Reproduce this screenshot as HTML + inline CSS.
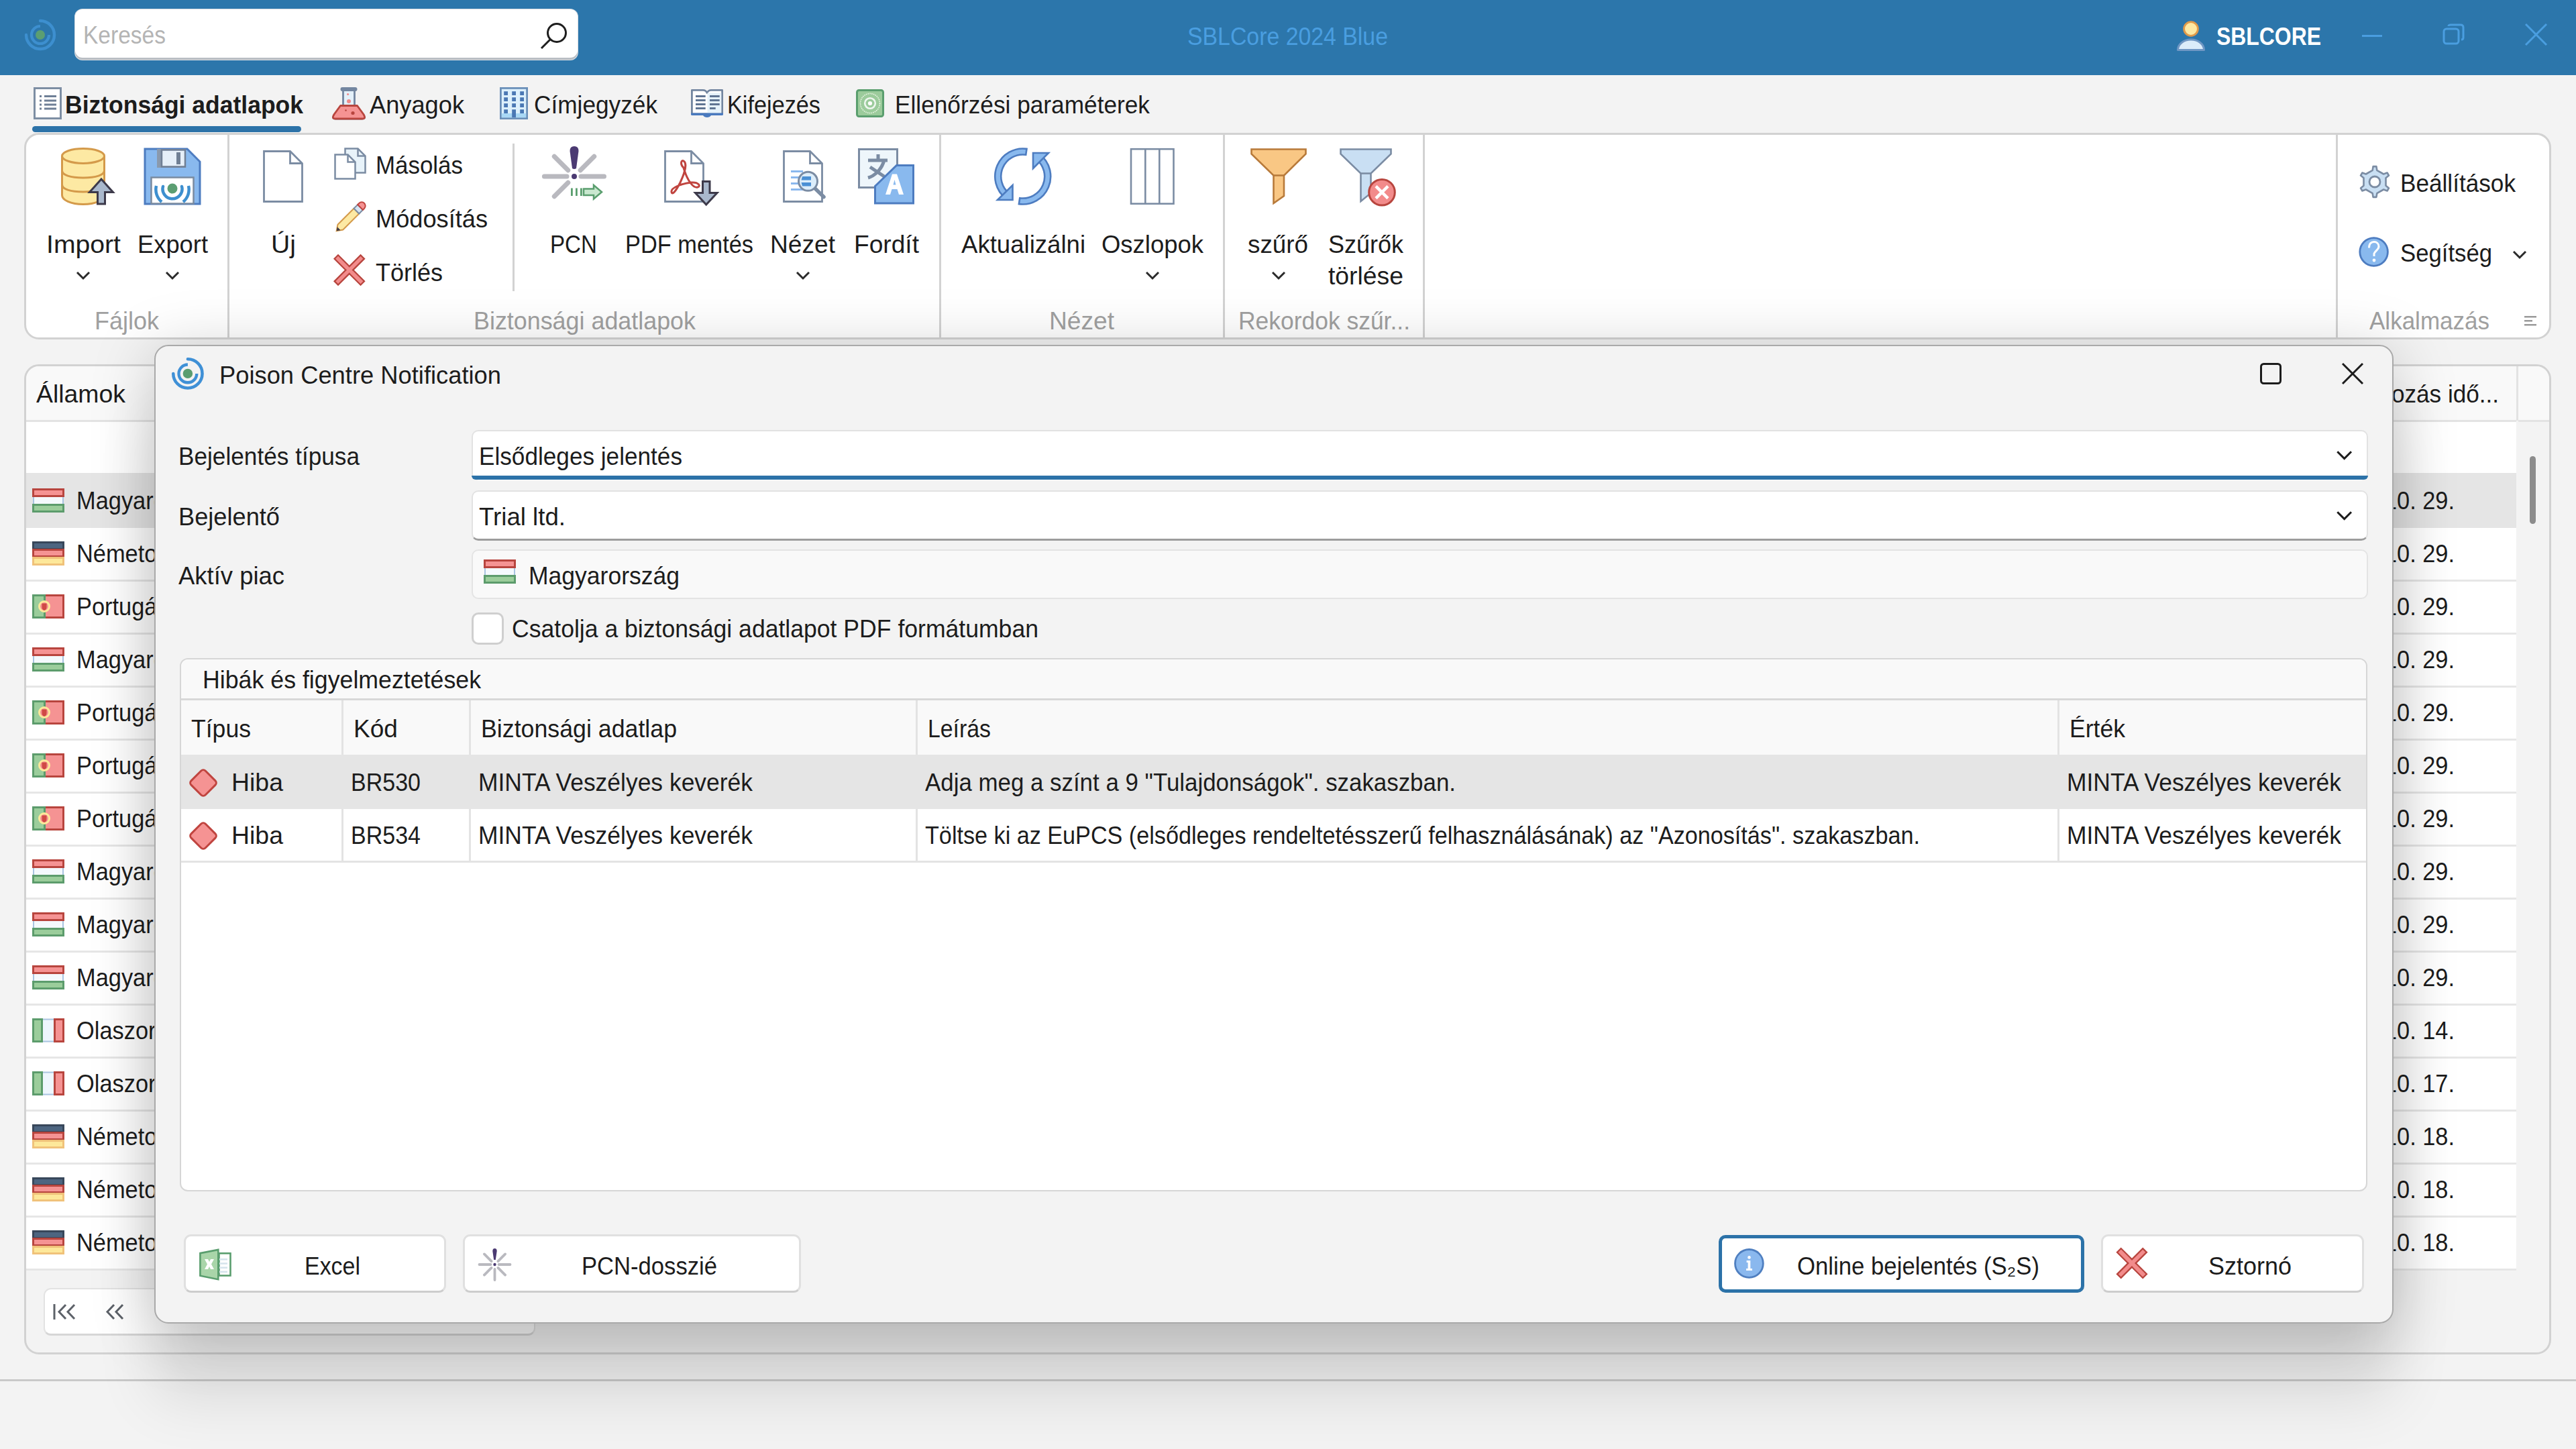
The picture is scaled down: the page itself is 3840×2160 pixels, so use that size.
<!DOCTYPE html><html><head><meta charset="utf-8"><style>
html,body{margin:0;padding:0;width:3840px;height:2160px;overflow:hidden;background:#f3f3f3;font-family:'Liberation Sans', sans-serif;}
.t{position:absolute;white-space:nowrap;line-height:1;transform-origin:0 0;font-family:'Liberation Sans', sans-serif;}
svg{overflow:visible}
</style></head><body>
<div style="position:absolute;left:0px;top:0px;width:3840px;height:112px;background:#2c76ab"></div>
<div style="position:absolute;left:112px;top:14px;width:749px;height:75px;background:#fff;border-radius:11px;box-shadow:inset 0 -3px 0 #b9bec4, 0 0 0 1px #d9dde2;box-sizing:border-box"></div>
<span class="t" id="t1" style="left:123.5px;top:35px;font-size:36px;color:#b4b4b4;transform:scaleX(0.9313);">Keresés</span>
<svg style="position:absolute;left:800px;top:30px" width="50" height="50" viewBox="0 0 50 50"><circle cx="30" cy="19" r="13.5" fill="none" stroke="#1e1e1e" stroke-width="3"/><line x1="20.5" y1="28.5" x2="7" y2="42" stroke="#1e1e1e" stroke-width="3"/></svg>
<svg style="position:absolute;left:30.0px;top:22.0px" width="60.0" height="60.0" viewBox="-30.0 -30.0 60.0 60.0"><circle cx="0" cy="0" r="7.0" fill="#5b9e72"/><path d="M 0 -13.0 A 13.0 13.0 0 1 0 13.0 0" fill="none" stroke="#3d8fcf" stroke-width="4.2" /><path d="M -21.0 0 A 21.0 21.0 0 1 0 0 -21.0" fill="none" stroke="#3d8fcf" stroke-width="4.4" stroke-linecap="round"/></svg>
<span class="t" id="t2" style="left:1769.5px;top:37px;font-size:36px;color:#4a9ee0;transform:scaleX(0.9396);">SBLCore 2024 Blue</span>
<svg style="position:absolute;left:3240px;top:28px" width="52" height="50" viewBox="0 0 52 50"><circle cx="26" cy="15" r="10.4" fill="#fde9a3" stroke="#e09a4a" stroke-width="2.8"/><path d="M6.5 46.5 A19.5 15.5 0 0 1 45.5 46.5 Z" fill="#dcedfa" stroke="#6f97c4" stroke-width="3" stroke-linejoin="round"/></svg>
<span class="t" id="t3" style="left:3303.5px;top:37px;font-size:36px;font-weight:bold;color:#ffffff;transform:scaleX(0.8863);">SBLCORE</span>
<div style="position:absolute;left:3521px;top:52px;width:30px;height:3px;background:#4a9ee0"></div>
<svg style="position:absolute;left:3640px;top:34px" width="36" height="36" viewBox="0 0 36 36"><rect x="3" y="9" width="22" height="22" rx="4" fill="none" stroke="#4a9ee0" stroke-width="3"/><path d="M10 5 Q10 3 13 3 H28 Q32 3 32 7 V22 Q32 25 29 25" fill="none" stroke="#4a9ee0" stroke-width="3"/></svg>
<svg style="position:absolute;left:3762px;top:34px" width="36" height="36" viewBox="0 0 36 36"><line x1="3" y1="2" x2="34" y2="33" stroke="#4a9ee0" stroke-width="3"/><line x1="34" y1="2" x2="3" y2="33" stroke="#4a9ee0" stroke-width="3"/></svg>
<span class="t" id="t4" style="left:96.5px;top:139px;font-size:36px;font-weight:bold;color:#1c1c1c;transform:scaleX(0.9859);">Biztonsági adatlapok</span>
<div style="position:absolute;left:48px;top:188px;width:401px;height:9px;background:#2c72a8;border-radius:5px"></div>
<span class="t" id="t5" style="left:550.5px;top:139px;font-size:36px;color:#1c1c1c;transform:scaleX(1.0064);">Anyagok</span>
<span class="t" id="t6" style="left:795.5px;top:139px;font-size:36px;color:#1c1c1c;transform:scaleX(0.9784);">Címjegyzék</span>
<span class="t" id="t7" style="left:1083.5px;top:139px;font-size:36px;color:#1c1c1c;transform:scaleX(0.9515);">Kifejezés</span>
<span class="t" id="t8" style="left:1333.5px;top:139px;font-size:36px;color:#1c1c1c;transform:scaleX(0.9789);">Ellenőrzési paraméterek</span>
<svg style="position:absolute;left:50px;top:130px" width="42" height="48" viewBox="0 0 42 48"><rect x="1.5" y="1.5" width="39" height="45" fill="#fff" stroke="#7d8ea3" stroke-width="3"/><rect x="9" y="12" width="3" height="3" fill="#6e7f96"/><rect x="16" y="12" width="18" height="3" fill="#6e7f96"/><rect x="9" y="18.5" width="3" height="3" fill="#6e7f96"/><rect x="16" y="18.5" width="18" height="3" fill="#6e7f96"/><rect x="9" y="24.5" width="3" height="3" fill="#6e7f96"/><rect x="16" y="24.5" width="18" height="3" fill="#6e7f96"/><rect x="9" y="30.5" width="3" height="3" fill="#6e7f96"/><rect x="16" y="30.5" width="18" height="3" fill="#6e7f96"/></svg>
<svg style="position:absolute;left:0px;top:0px" width="1" height="1" viewBox="0 0 1 1"><path d="M511.5 136 V157 L497.5 172.5 Q494.5 177 500 177 H540 Q545.5 177 542.5 172.5 L528.5 157 V136" fill="#e4f1fa" stroke="#7386a0" stroke-width="2.8" stroke-linejoin="round"/><rect x="507.5" y="130" width="25" height="6" rx="3" fill="#7386a0"/><path d="M507.5 157.5 H532.5 L542 170.5 Q546 177 540 177 H500 Q494 177 498 170.5 Z" fill="#f59393" stroke="#b8453e" stroke-width="2.8" stroke-linejoin="round"/><circle cx="518.6" cy="140.5" r="1.6" fill="#f08a8a"/><circle cx="520" cy="151" r="3" fill="#f08a8a"/><circle cx="515.5" cy="164.5" r="1.3" fill="#b8453e"/><circle cx="526" cy="168.5" r="2.6" fill="#b8453e"/></svg>
<svg style="position:absolute;left:745px;top:130px" width="42" height="48" viewBox="0 0 42 48"><rect x="1.4" y="1.4" width="39.2" height="45.2" fill="#dcf0fc" stroke="#6a8fb8" stroke-width="2.8"/><rect x="2.8" y="39" width="36.4" height="6.2" fill="#a9d8f5"/><rect x="6.2" y="6.2" width="5.8" height="5.8" fill="#4a78b4"/><rect x="6.2" y="15.2" width="5.8" height="5.8" fill="#4a78b4"/><rect x="6.2" y="24.2" width="5.8" height="5.8" fill="#4a78b4"/><rect x="6.2" y="33.2" width="5.8" height="5.8" fill="#4a78b4"/><rect x="18.2" y="6.2" width="5.8" height="5.8" fill="#4a78b4"/><rect x="18.2" y="15.2" width="5.8" height="5.8" fill="#4a78b4"/><rect x="18.2" y="24.2" width="5.8" height="5.8" fill="#4a78b4"/><rect x="30.2" y="6.2" width="5.8" height="5.8" fill="#4a78b4"/><rect x="30.2" y="15.2" width="5.8" height="5.8" fill="#4a78b4"/><rect x="30.2" y="24.2" width="5.8" height="5.8" fill="#4a78b4"/><rect x="30.2" y="33.2" width="5.8" height="5.8" fill="#4a78b4"/><rect x="18.2" y="33.2" width="5.8" height="12" fill="#4a78b4"/></svg>
<svg style="position:absolute;left:1029px;top:132px" width="50" height="44" viewBox="0 0 50 44"><path d="M2.4 2.4 H19 Q23 2.4 25 6.5 Q27 2.4 31 2.4 H47.6 V38 H2.4 Z" fill="#fff" stroke="#7386a0" stroke-width="2.8" stroke-linejoin="round"/><rect x="25.5" y="6.5" width="20.7" height="30" fill="#e6f2fa"/><rect x="8" y="10" width="14.7" height="3" fill="#607593"/><rect x="29" y="10" width="14.7" height="3" fill="#607593"/><rect x="8" y="16" width="14.7" height="3" fill="#607593"/><rect x="29" y="16" width="14.7" height="3" fill="#607593"/><rect x="8" y="22" width="14.7" height="3" fill="#607593"/><rect x="29" y="22" width="14.7" height="3" fill="#607593"/><rect x="8" y="28" width="14.7" height="3" fill="#607593"/><rect x="29" y="28" width="8.7" height="3" fill="#607593"/><path d="M1 36.5 H49 V38.5 Q49 40 47 40 H31 Q29 43 25 43 Q21 43 19 40 H3 Q1 40 1 38.5 Z" fill="#4a7abf"/></svg>
<svg style="position:absolute;left:1276px;top:133px" width="42" height="42" viewBox="0 0 42 42"><rect x="1.5" y="1.5" width="39" height="39" rx="3" fill="#9bcb9b" stroke="#5a9e6e" stroke-width="3"/><circle cx="21" cy="21" r="14.5" fill="none" stroke="#eaf5e4" stroke-width="1.6" stroke-dasharray="1.6 1.2"/><circle cx="21" cy="21" r="7.8" fill="none" stroke="#eef6ef" stroke-width="2.6"/><circle cx="21" cy="21" r="3.1" fill="#fff"/></svg>
<div style="position:absolute;left:36px;top:198px;width:3767px;height:308px;background:#fff;border:3px solid #d2d2d2;border-radius:22px;box-sizing:border-box"></div>
<div style="position:absolute;left:339px;top:200px;width:3px;height:304px;background:#d2d2d2"></div>
<div style="position:absolute;left:1400px;top:200px;width:3px;height:304px;background:#d2d2d2"></div>
<div style="position:absolute;left:1823px;top:200px;width:3px;height:304px;background:#d2d2d2"></div>
<div style="position:absolute;left:2121px;top:200px;width:3px;height:304px;background:#d2d2d2"></div>
<div style="position:absolute;left:3482px;top:200px;width:3px;height:304px;background:#d2d2d2"></div>
<div style="position:absolute;left:764px;top:214px;width:3px;height:220px;background:#d2d2d2"></div>
<span class="t" id="t9" style="left:68.5px;top:347px;font-size:36px;color:#1c1c1c;transform:scaleX(1.0879);">Import</span>
<span class="t" id="t10" style="left:204.5px;top:347px;font-size:36px;color:#1c1c1c;transform:scaleX(1.0092);">Export</span>
<span class="t" id="t11" style="left:403.5px;top:347px;font-size:36px;color:#1c1c1c;transform:scaleX(1.0882);">Új</span>
<span class="t" id="t12" style="left:559.5px;top:229px;font-size:36px;color:#1c1c1c;transform:scaleX(0.9697);">Másolás</span>
<span class="t" id="t13" style="left:559.5px;top:309px;font-size:36px;color:#1c1c1c;transform:scaleX(1.0056);">Módosítás</span>
<span class="t" id="t14" style="left:559.5px;top:389px;font-size:36px;color:#1c1c1c;transform:scaleX(0.9997);">Törlés</span>
<span class="t" id="t15" style="left:819.5px;top:347px;font-size:36px;color:#1c1c1c;transform:scaleX(0.9209);">PCN</span>
<span class="t" id="t16" style="left:931.5px;top:347px;font-size:36px;color:#1c1c1c;transform:scaleX(0.9547);">PDF mentés</span>
<span class="t" id="t17" style="left:1147.5px;top:347px;font-size:36px;color:#1c1c1c;transform:scaleX(1.0314);">Nézet</span>
<span class="t" id="t18" style="left:1272.5px;top:347px;font-size:36px;color:#1c1c1c;transform:scaleX(1.0316);">Fordít</span>
<span class="t" id="t19" style="left:1432.5px;top:347px;font-size:36px;color:#1c1c1c;transform:scaleX(1.0160);">Aktualizálni</span>
<span class="t" id="t20" style="left:1641.5px;top:347px;font-size:36px;color:#1c1c1c;transform:scaleX(1.0128);">Oszlopok</span>
<span class="t" id="t21" style="left:1859.5px;top:347px;font-size:36px;color:#1c1c1c;transform:scaleX(1.0224);">szűrő</span>
<span class="t" id="t22" style="left:1979.5px;top:347px;font-size:36px;color:#1c1c1c;transform:scaleX(0.9996);">Szűrők</span>
<span class="t" id="t23" style="left:1979.5px;top:394px;font-size:36px;color:#1c1c1c;transform:scaleX(1.0364);">törlése</span>
<span class="t" id="t24" style="left:3577.5px;top:256px;font-size:36px;color:#1c1c1c;transform:scaleX(0.9767);">Beállítások</span>
<span class="t" id="t25" style="left:3577.5px;top:360px;font-size:36px;color:#1c1c1c;transform:scaleX(0.9640);">Segítség</span>
<span class="t" id="t26" style="left:140.5px;top:461px;font-size:36px;color:#a0a0a0;transform:scaleX(0.9997);">Fájlok</span>
<span class="t" id="t27" style="left:705.5px;top:461px;font-size:36px;color:#a0a0a0;transform:scaleX(0.9963);">Biztonsági adatlapok</span>
<span class="t" id="t28" style="left:1563.5px;top:461px;font-size:36px;color:#a0a0a0;transform:scaleX(1.0314);">Nézet</span>
<span class="t" id="t29" style="left:1845.5px;top:461px;font-size:36px;color:#a0a0a0;transform:scaleX(0.9842);">Rekordok szűr...</span>
<span class="t" id="t30" style="left:3531.5px;top:461px;font-size:36px;color:#a0a0a0;transform:scaleX(0.9725);">Alkalmazás</span>
<svg style="position:absolute;left:88px;top:218px" width="84" height="90" viewBox="0 0 84 90"><path d="M4.5 14.5 V73 C4.5 80 17 86.5 36 86.5 C55 86.5 67.5 80 67.5 73 V14.5" fill="#fde9a3" stroke="#d49a4a" stroke-width="3"/><ellipse cx="36" cy="14.5" rx="31.5" ry="11" fill="#fde9a3" stroke="#d49a4a" stroke-width="3"/><path d="M4.5 36 C4.5 43 17 47 36 47 C55 47 67.5 43 67.5 36" fill="none" stroke="#d49a4a" stroke-width="3"/><path d="M4.5 57 C4.5 64 17 68 36 68 C55 68 67.5 64 67.5 57" fill="none" stroke="#d49a4a" stroke-width="3"/><path d="M63 49 L80.5 68.5 H68.5 V86 H57.5 V68.5 H45.5 Z" fill="#a9b8cc" stroke="#3d3a4a" stroke-width="3" stroke-linejoin="miter"/></svg>
<svg style="position:absolute;left:213px;top:219px" width="88" height="88" viewBox="0 0 88 88"><path d="M3 3 H66 L85 22 V85 H3 Z" fill="#89b9ee" stroke="#4d7cc0" stroke-width="3"/><rect x="21" y="3" width="43" height="28" fill="#8a99ac"/><rect x="28" y="4.5" width="35" height="25" fill="#e6eff8" stroke="#707f94" stroke-width="2.5"/><rect x="50" y="8" width="6" height="18" fill="#707f94"/><rect x="12.5" y="45.5" width="63" height="39" fill="#fff" stroke="#7a8ba0" stroke-width="2.5"/><circle cx="44" cy="62" r="7.5" fill="#5b9e72"/><path d="M58 59 A14.5 14.5 0 1 1 30 59" fill="none" stroke="#3d8fcf" stroke-width="4.5" stroke-linecap="round"/><path d="M20 58 A24 24 0 0 0 28 82 M68 58 A24 24 0 0 1 60 82" fill="none" stroke="#3d8fcf" stroke-width="4.5"/><path d="M30 41 A 17 17 0 0 1 58 41" fill="none" stroke="#fff" stroke-width="0"/></svg>
<svg style="position:absolute;left:0px;top:0px" width="1" height="1" viewBox="0 0 1 1"><path d="M393.5 225.5 H432.5 L450.5 243.5 V300.5 H393.5 Z" fill="#fff" stroke="#7b8ca3" stroke-width="2.8" stroke-linejoin="miter"/><path d="M432.5 225.5 V243.5 H450.5" fill="none" stroke="#7b8ca3" stroke-width="2.8"/></svg>
<svg style="position:absolute;left:0px;top:0px" width="1" height="1" viewBox="0 0 1 1"><path d="M514.5 221.5 H533.5 L544.5 232.5 V257.5 H514.5 Z" fill="#e8f3fa" stroke="#7b8ca3" stroke-width="2.5" stroke-linejoin="miter"/><path d="M533.5 221.5 V232.5 H544.5" fill="none" stroke="#7b8ca3" stroke-width="2.5"/><path d="M499.5 230.5 H518.5 L529.5 241.5 V266.5 H499.5 Z" fill="#fff" stroke="#7b8ca3" stroke-width="2.5" stroke-linejoin="miter"/><path d="M518.5 230.5 V241.5 H529.5" fill="none" stroke="#7b8ca3" stroke-width="2.5"/></svg>
<svg style="position:absolute;left:0px;top:0px" width="1" height="1" viewBox="0 0 1 1"><g transform="translate(521.5 324.5) rotate(-45)"><path d="M-28 0 L-20 -5.5 H14 V5.5 H-20 Z" fill="#fde9a3" stroke="#d49a4a" stroke-width="2"/><path d="M-28 0 L-23 -3.4 V3.4 Z" fill="#3d3a4a"/><rect x="14" y="-5.5" width="8" height="11" fill="#d6e4f2" stroke="#7b8ca3" stroke-width="2"/><path d="M22 -5.5 H25 A5.5 5.5 0 0 1 25 5.5 H22 Z" fill="#f59393" stroke="#c0443f" stroke-width="2"/></g></svg>
<svg style="position:absolute;left:0px;top:0px" width="1" height="1" viewBox="0 0 1 1"><g transform="translate(520.8 402.5)"><g transform="rotate(45)"><rect x="-27.5" y="-3.8" width="55" height="7.6" fill="#f28b8b" stroke="#b8453e" stroke-width="2.4"/></g><g transform="rotate(-45)"><rect x="-27.5" y="-3.8" width="55" height="7.6" fill="#f28b8b" stroke="#b8453e" stroke-width="2.4"/></g><g transform="rotate(45)"><rect x="-26.3" y="-2.6" width="52.6" height="5.2" fill="#f28b8b"/></g></g></svg>
<svg style="position:absolute;left:0px;top:0px" width="1" height="1" viewBox="0 0 1 1"><line x1="845.0" y1="263.0" x2="811.4" y2="263.0" stroke="#b9b9bf" stroke-width="7.0" stroke-linecap="round"/><line x1="866.0" y1="263.0" x2="900.5" y2="263.0" stroke="#b9b9bf" stroke-width="7.0" stroke-linecap="round"/><line x1="846.8" y1="253.8" x2="826.3" y2="233.3" stroke="#b9b9bf" stroke-width="7.0" stroke-linecap="round"/><line x1="865.2" y1="253.8" x2="885.7" y2="233.3" stroke="#b9b9bf" stroke-width="7.0" stroke-linecap="round"/><line x1="846.8" y1="272.2" x2="826.3" y2="292.7" stroke="#b9b9bf" stroke-width="7.0" stroke-linecap="round"/><path d="M849.5 225.0 Q849.5 218.0 856 218.0 Q862.5 218.0 862.5 225.0 L859.0 251.0 Q856 253.0 853.0 251.0 Z" fill="#4b3a72"/><circle cx="856" cy="263" r="4.0" fill="#4b3a72"/><rect x="851.0" y="280.5" width="2.8" height="11.5" fill="#5a9e6e"/><rect x="858.0" y="280.5" width="2.8" height="11.5" fill="#5a9e6e"/><rect x="865.0" y="280.5" width="2.8" height="11.5" fill="#5a9e6e"/><path d="M870.0 281.5 H885.0 V276.0 L897.0 286.2 L885.0 296.5 V291.0 H870.0 Z" fill="#c9e8cf" stroke="#5a9e6e" stroke-width="2.5"/></svg>
<svg style="position:absolute;left:0px;top:0px" width="1" height="1" viewBox="0 0 1 1"><path d="M991.5 225.5 H1030.5 L1048.5 243.5 V300.5 H991.5 Z" fill="#fff" stroke="#7b8ca3" stroke-width="2.8" stroke-linejoin="miter"/><path d="M1030.5 225.5 V243.5 H1048.5" fill="none" stroke="#7b8ca3" stroke-width="2.8"/><path d="M1019 250 C1013 244 1016 238 1019 240 C1024 243 1022 255 1014 272 C1008 284 1002 292 1001 286 C1000 280 1015 274 1030 272 C1042 271 1045 278 1040 279 C1033 281 1024 268 1019 250 Z" fill="none" stroke="#c0443f" stroke-width="3"/><path d="M1047.5 270.5 H1058 V287.5 H1069 L1052.7 305 L1036.5 287.5 H1047.5 Z" fill="#a9b8cc" stroke="#3d3a4a" stroke-width="3" stroke-linejoin="miter"/></svg>
<svg style="position:absolute;left:0px;top:0px" width="1" height="1" viewBox="0 0 1 1"><path d="M1168.5 225.5 H1207.5 L1225.5 243.5 V300.5 H1168.5 Z" fill="#fff" stroke="#7b8ca3" stroke-width="2.8" stroke-linejoin="miter"/><path d="M1207.5 225.5 V243.5 H1225.5" fill="none" stroke="#7b8ca3" stroke-width="2.8"/><rect x="1179" y="254" width="18" height="3" fill="#8ab8ee"/><rect x="1179" y="263" width="18" height="3" fill="#8ab8ee"/><rect x="1179" y="272" width="18" height="3" fill="#8ab8ee"/><rect x="1179" y="281" width="18" height="3" fill="#8ab8ee"/><line x1="1214" y1="280" x2="1228" y2="293.5" stroke="#7b8ca3" stroke-width="5.5" stroke-linecap="round"/><circle cx="1204.5" cy="270.3" r="14" fill="#dcedfa" stroke="#7b8ca3" stroke-width="3"/><path d="M1196 263 H1209 V268.5 H1194.5 Z M1194.5 272 H1209 V277.5 H1196 Z" fill="#4a8fd4"/></svg>
<svg style="position:absolute;left:0px;top:0px" width="1" height="1" viewBox="0 0 1 1"><rect x="1280.5" y="222.5" width="57" height="57" fill="#eef6fb" stroke="#7b8ca3" stroke-width="3"/><path d="M1294 239 H1323 M1309 230 V239 M1318 239 C1314 253 1304 262 1294 265 M1297 249 L1318 263" fill="none" stroke="#7b8ca3" stroke-width="5"/><path d="M1304.5 277.5 L1336.5 246.5 H1361.5 V303 H1304.5 Z" fill="#89b9ee" stroke="#4d7cc0" stroke-width="3"/><path d="M1320 290 L1330 259.5 H1337 L1347 290 H1340 L1337.5 282 H1329.5 L1327 290 Z M1331.5 275.5 H1335.5 L1333.5 268 Z" fill="#fff" fill-rule="evenodd"/></svg>
<svg style="position:absolute;left:0px;top:0px" width="1" height="1" viewBox="0 0 1 1"><path d="M1530.5 221.9 A41.5 41.5 0 0 0 1499.2 295.7 L1504.7 288.6 A32.5 32.5 0 0 1 1529.2 230.8 Z " fill="#89b9ee" stroke="#4d7cc0" stroke-width="2.6"/><path d="M1487 298 H1509.5 V276 Z" fill="#89b9ee" stroke="#4d7cc0" stroke-width="2.6" stroke-linejoin="miter"/><path d="M1518.9 304.1 A41.5 41.5 0 0 0 1550.2 230.3 L1544.7 237.4 A32.5 32.5 0 0 1 1520.2 295.2 Z" fill="#89b9ee" stroke="#4d7cc0" stroke-width="2.6"/><path d="M1540 228 H1563 L1540 251 Z" fill="#89b9ee" stroke="#4d7cc0" stroke-width="2.6" stroke-linejoin="miter"/></svg>
<svg style="position:absolute;left:0px;top:0px" width="1" height="1" viewBox="0 0 1 1"><rect x="1686" y="222.2" width="63.5" height="81.5" fill="#fff" stroke="#7b8ca3" stroke-width="2.6"/><line x1="1707.3" y1="222" x2="1707.3" y2="304" stroke="#7b8ca3" stroke-width="2.6"/><line x1="1728.3" y1="222" x2="1728.3" y2="304" stroke="#7b8ca3" stroke-width="2.6"/></svg>
<svg style="position:absolute;left:0px;top:0px" width="1" height="1" viewBox="0 0 1 1"><path d="M1865.5 222.5 H1946.5 V229.5 L1914 261.5 V292 L1898.5 303 V261.5 L1865.5 229.5 Z" fill="#f9c784" stroke="#b87a3a" stroke-width="2.6" stroke-linejoin="miter"/><line x1="1898.5" y1="261.5" x2="1914" y2="261.5" stroke="#b87a3a" stroke-width="2.6"/></svg>
<svg style="position:absolute;left:0px;top:0px" width="1" height="1" viewBox="0 0 1 1"><path d="M1998.5 222.5 H2073.5 V229.5 L2043.5 258.5 V288 L2028.5 300 V258.5 L1998.5 229.5 Z" fill="#c9dff3" stroke="#7b8ca3" stroke-width="2.6" stroke-linejoin="miter"/><line x1="2028.5" y1="258.5" x2="2043.5" y2="258.5" stroke="#7b8ca3" stroke-width="2.6"/><circle cx="2060" cy="286.7" r="19.3" fill="#f28b8b" stroke="#b8453e" stroke-width="3"/><path d="M2051 277.7 L2069 295.7 M2069 277.7 L2051 295.7" stroke="#fff" stroke-width="4.5"/></svg>
<svg style="position:absolute;left:0px;top:0px" width="1" height="1" viewBox="0 0 1 1"><path d="M3536.7 253.8 L3537.6 248.1 L3542.4 248.1 L3543.3 253.8 L3553.2 259.5 L3558.6 257.5 L3561.0 261.6 L3556.5 265.3 L3556.5 276.7 L3561.0 280.4 L3558.6 284.5 L3553.2 282.5 L3543.3 288.2 L3542.4 293.9 L3537.6 293.9 L3536.7 288.2 L3526.8 282.5 L3521.4 284.5 L3519.0 280.4 L3523.5 276.7 L3523.5 265.3 L3519.0 261.6 L3521.4 257.5 L3526.8 259.5 Z" fill="#c9dff3" stroke="#7b8ca3" stroke-width="2.6" stroke-linejoin="round"/><circle cx="3540" cy="271" r="8" fill="#fff" stroke="#7b8ca3" stroke-width="2.8"/></svg>
<svg style="position:absolute;left:0px;top:0px" width="1" height="1" viewBox="0 0 1 1"><circle cx="3538.6" cy="375.5" r="20.8" fill="#89b9ee" stroke="#4d7cc0" stroke-width="2.8"/><path d="M3531.5 369.5 C3531.5 363 3535 360.5 3538.8 360.5 C3543 360.5 3546 363.5 3546 367.5 C3546 372 3541 373.5 3539 378 V382" fill="none" stroke="#fff" stroke-width="3"/><circle cx="3539" cy="388" r="2.4" fill="#fff"/></svg>
<svg style="position:absolute;left:113.0px;top:404.0px" width="22.0" height="14.0" viewBox="0 0 22.0 14.0"><polyline points="2.0,2.0 11.0,11.0 20.0,2.0" fill="none" stroke="#2a2a2a" stroke-width="3"/></svg>
<svg style="position:absolute;left:246.0px;top:404.0px" width="22.0" height="14.0" viewBox="0 0 22.0 14.0"><polyline points="2.0,2.0 11.0,11.0 20.0,2.0" fill="none" stroke="#2a2a2a" stroke-width="3"/></svg>
<svg style="position:absolute;left:1186.0px;top:404.0px" width="22.0" height="14.0" viewBox="0 0 22.0 14.0"><polyline points="2.0,2.0 11.0,11.0 20.0,2.0" fill="none" stroke="#2a2a2a" stroke-width="3"/></svg>
<svg style="position:absolute;left:1707.0px;top:404.0px" width="22.0" height="14.0" viewBox="0 0 22.0 14.0"><polyline points="2.0,2.0 11.0,11.0 20.0,2.0" fill="none" stroke="#2a2a2a" stroke-width="3"/></svg>
<svg style="position:absolute;left:1895.0px;top:404.0px" width="22.0" height="14.0" viewBox="0 0 22.0 14.0"><polyline points="2.0,2.0 11.0,11.0 20.0,2.0" fill="none" stroke="#2a2a2a" stroke-width="3"/></svg>
<svg style="position:absolute;left:3745.0px;top:373.0px" width="22.0" height="14.0" viewBox="0 0 22.0 14.0"><polyline points="2.0,2.0 11.0,11.0 20.0,2.0" fill="none" stroke="#2a2a2a" stroke-width="3"/></svg>
<svg style="position:absolute;left:3762px;top:469px" width="22" height="20" viewBox="0 0 22 20"><rect x="1" y="2" width="18" height="2.5" fill="#9a9a9a"/><rect x="1" y="8" width="12" height="2.5" fill="#9a9a9a"/><rect x="1" y="14" width="18" height="2.5" fill="#9a9a9a"/></svg>
<div style="position:absolute;left:36px;top:543px;width:3767px;height:1476px;background:#f3f3f3;border:3px solid #d2d2d2;border-radius:22px;box-sizing:border-box"></div>
<div style="position:absolute;left:39px;top:546px;width:3712px;height:81px;background:#f9f9f9;border-top-left-radius:19px"></div>
<div style="position:absolute;left:39px;top:626px;width:3712px;height:3px;background:#e3e3e3"></div>
<div style="position:absolute;left:39px;top:629px;width:3712px;height:1264px;background:#fff"></div>
<div style="position:absolute;left:3751px;top:546px;width:3px;height:81px;background:#e3e3e3"></div>
<div style="position:absolute;left:3754px;top:546px;width:46px;height:81px;background:#f9f9f9;border-top-right-radius:19px"></div>
<div style="position:absolute;left:3754px;top:626px;width:46px;height:3px;background:#e3e3e3"></div>
<span class="t" id="t31" style="left:53.5px;top:570px;font-size:36px;color:#1c1c1c;transform:scaleX(1.0387);">Államok</span>
<span class="t" id="t32" style="left:3564.5px;top:570px;font-size:36px;color:#1c1c1c;transform:scaleX(0.9751);">ozás idő...</span>
<div style="position:absolute;left:39px;top:705px;width:3712px;height:82px;background:#e5e5e5"></div>
<div style="position:absolute;left:39px;top:864px;width:3712px;height:3px;background:#e6e6e6"></div>
<div style="position:absolute;left:39px;top:943px;width:3712px;height:3px;background:#e6e6e6"></div>
<div style="position:absolute;left:39px;top:1022px;width:3712px;height:3px;background:#e6e6e6"></div>
<div style="position:absolute;left:39px;top:1101px;width:3712px;height:3px;background:#e6e6e6"></div>
<div style="position:absolute;left:39px;top:1180px;width:3712px;height:3px;background:#e6e6e6"></div>
<div style="position:absolute;left:39px;top:1259px;width:3712px;height:3px;background:#e6e6e6"></div>
<div style="position:absolute;left:39px;top:1338px;width:3712px;height:3px;background:#e6e6e6"></div>
<div style="position:absolute;left:39px;top:1417px;width:3712px;height:3px;background:#e6e6e6"></div>
<div style="position:absolute;left:39px;top:1496px;width:3712px;height:3px;background:#e6e6e6"></div>
<div style="position:absolute;left:39px;top:1575px;width:3712px;height:3px;background:#e6e6e6"></div>
<div style="position:absolute;left:39px;top:1654px;width:3712px;height:3px;background:#e6e6e6"></div>
<div style="position:absolute;left:39px;top:1733px;width:3712px;height:3px;background:#e6e6e6"></div>
<div style="position:absolute;left:39px;top:1812px;width:3712px;height:3px;background:#e6e6e6"></div>
<div style="position:absolute;left:39px;top:1891px;width:3712px;height:3px;background:#e6e6e6"></div>
<svg style="position:absolute;left:48px;top:728px" width="48" height="36" viewBox="0 0 48 36"><rect x="1" y="11" width="46" height="14" fill="#f4f9fd"/><line x1="2" y1="11" x2="2" y2="25" stroke="#a9c4e0" stroke-width="2"/><line x1="46" y1="11" x2="46" y2="25" stroke="#a9c4e0" stroke-width="2"/><rect x="1.5" y="1.5" width="45" height="10" fill="#f59393" stroke="#b8453e" stroke-width="3"/><rect x="1.5" y="24.5" width="45" height="10" fill="#9bcd9b" stroke="#5c9c6c" stroke-width="3"/></svg>
<span class="t" id="t33" style="left:113.5px;top:729px;font-size:36px;color:#1c1c1c;transform:scaleX(0.9550);">Magyarország</span>
<span class="t" id="t34" style="left:3553.5px;top:729px;font-size:36px;color:#1c1c1c;transform:scaleX(0.9537);">10. 29.</span>
<svg style="position:absolute;left:48px;top:807px" width="48" height="36" viewBox="0 0 48 36"><rect x="1.5" y="1.5" width="45" height="10" fill="#4d6580" stroke="#38475a" stroke-width="3"/><rect x="1.5" y="12.5" width="45" height="10" fill="#f59393" stroke="#b8453e" stroke-width="3"/><rect x="1.5" y="24.5" width="45" height="10" fill="#fde89a" stroke="#f0c27a" stroke-width="3"/></svg>
<span class="t" id="t35" style="left:113.5px;top:808px;font-size:36px;color:#1c1c1c;transform:scaleX(0.9550);">Németország</span>
<span class="t" id="t36" style="left:3553.5px;top:808px;font-size:36px;color:#1c1c1c;transform:scaleX(0.9537);">10. 29.</span>
<svg style="position:absolute;left:48px;top:886px" width="48" height="36" viewBox="0 0 48 36"><rect x="1.5" y="1.5" width="45" height="33" fill="#f59393" stroke="#b8453e" stroke-width="3"/><rect x="1.5" y="1.5" width="17" height="33" fill="#9bcd9b" stroke="#5c9c6c" stroke-width="3"/><circle cx="18" cy="18" r="7.5" fill="#f59393" stroke="#fde89a" stroke-width="3"/><path d="M14.5 13.5 H21.5 V19 Q21.5 23 18 24 Q14.5 23 14.5 19 Z" fill="#d04a45"/></svg>
<span class="t" id="t37" style="left:113.5px;top:887px;font-size:36px;color:#1c1c1c;transform:scaleX(0.9550);">Portugália</span>
<span class="t" id="t38" style="left:3553.5px;top:887px;font-size:36px;color:#1c1c1c;transform:scaleX(0.9537);">10. 29.</span>
<svg style="position:absolute;left:48px;top:965px" width="48" height="36" viewBox="0 0 48 36"><rect x="1" y="11" width="46" height="14" fill="#f4f9fd"/><line x1="2" y1="11" x2="2" y2="25" stroke="#a9c4e0" stroke-width="2"/><line x1="46" y1="11" x2="46" y2="25" stroke="#a9c4e0" stroke-width="2"/><rect x="1.5" y="1.5" width="45" height="10" fill="#f59393" stroke="#b8453e" stroke-width="3"/><rect x="1.5" y="24.5" width="45" height="10" fill="#9bcd9b" stroke="#5c9c6c" stroke-width="3"/></svg>
<span class="t" id="t39" style="left:113.5px;top:966px;font-size:36px;color:#1c1c1c;transform:scaleX(0.9550);">Magyarország</span>
<span class="t" id="t40" style="left:3553.5px;top:966px;font-size:36px;color:#1c1c1c;transform:scaleX(0.9537);">10. 29.</span>
<svg style="position:absolute;left:48px;top:1044px" width="48" height="36" viewBox="0 0 48 36"><rect x="1.5" y="1.5" width="45" height="33" fill="#f59393" stroke="#b8453e" stroke-width="3"/><rect x="1.5" y="1.5" width="17" height="33" fill="#9bcd9b" stroke="#5c9c6c" stroke-width="3"/><circle cx="18" cy="18" r="7.5" fill="#f59393" stroke="#fde89a" stroke-width="3"/><path d="M14.5 13.5 H21.5 V19 Q21.5 23 18 24 Q14.5 23 14.5 19 Z" fill="#d04a45"/></svg>
<span class="t" id="t41" style="left:113.5px;top:1045px;font-size:36px;color:#1c1c1c;transform:scaleX(0.9550);">Portugália</span>
<span class="t" id="t42" style="left:3553.5px;top:1045px;font-size:36px;color:#1c1c1c;transform:scaleX(0.9537);">10. 29.</span>
<svg style="position:absolute;left:48px;top:1123px" width="48" height="36" viewBox="0 0 48 36"><rect x="1.5" y="1.5" width="45" height="33" fill="#f59393" stroke="#b8453e" stroke-width="3"/><rect x="1.5" y="1.5" width="17" height="33" fill="#9bcd9b" stroke="#5c9c6c" stroke-width="3"/><circle cx="18" cy="18" r="7.5" fill="#f59393" stroke="#fde89a" stroke-width="3"/><path d="M14.5 13.5 H21.5 V19 Q21.5 23 18 24 Q14.5 23 14.5 19 Z" fill="#d04a45"/></svg>
<span class="t" id="t43" style="left:113.5px;top:1124px;font-size:36px;color:#1c1c1c;transform:scaleX(0.9550);">Portugália</span>
<span class="t" id="t44" style="left:3553.5px;top:1124px;font-size:36px;color:#1c1c1c;transform:scaleX(0.9537);">10. 29.</span>
<svg style="position:absolute;left:48px;top:1202px" width="48" height="36" viewBox="0 0 48 36"><rect x="1.5" y="1.5" width="45" height="33" fill="#f59393" stroke="#b8453e" stroke-width="3"/><rect x="1.5" y="1.5" width="17" height="33" fill="#9bcd9b" stroke="#5c9c6c" stroke-width="3"/><circle cx="18" cy="18" r="7.5" fill="#f59393" stroke="#fde89a" stroke-width="3"/><path d="M14.5 13.5 H21.5 V19 Q21.5 23 18 24 Q14.5 23 14.5 19 Z" fill="#d04a45"/></svg>
<span class="t" id="t45" style="left:113.5px;top:1203px;font-size:36px;color:#1c1c1c;transform:scaleX(0.9550);">Portugália</span>
<span class="t" id="t46" style="left:3553.5px;top:1203px;font-size:36px;color:#1c1c1c;transform:scaleX(0.9537);">10. 29.</span>
<svg style="position:absolute;left:48px;top:1281px" width="48" height="36" viewBox="0 0 48 36"><rect x="1" y="11" width="46" height="14" fill="#f4f9fd"/><line x1="2" y1="11" x2="2" y2="25" stroke="#a9c4e0" stroke-width="2"/><line x1="46" y1="11" x2="46" y2="25" stroke="#a9c4e0" stroke-width="2"/><rect x="1.5" y="1.5" width="45" height="10" fill="#f59393" stroke="#b8453e" stroke-width="3"/><rect x="1.5" y="24.5" width="45" height="10" fill="#9bcd9b" stroke="#5c9c6c" stroke-width="3"/></svg>
<span class="t" id="t47" style="left:113.5px;top:1282px;font-size:36px;color:#1c1c1c;transform:scaleX(0.9550);">Magyarország</span>
<span class="t" id="t48" style="left:3553.5px;top:1282px;font-size:36px;color:#1c1c1c;transform:scaleX(0.9537);">10. 29.</span>
<svg style="position:absolute;left:48px;top:1360px" width="48" height="36" viewBox="0 0 48 36"><rect x="1" y="11" width="46" height="14" fill="#f4f9fd"/><line x1="2" y1="11" x2="2" y2="25" stroke="#a9c4e0" stroke-width="2"/><line x1="46" y1="11" x2="46" y2="25" stroke="#a9c4e0" stroke-width="2"/><rect x="1.5" y="1.5" width="45" height="10" fill="#f59393" stroke="#b8453e" stroke-width="3"/><rect x="1.5" y="24.5" width="45" height="10" fill="#9bcd9b" stroke="#5c9c6c" stroke-width="3"/></svg>
<span class="t" id="t49" style="left:113.5px;top:1361px;font-size:36px;color:#1c1c1c;transform:scaleX(0.9550);">Magyarország</span>
<span class="t" id="t50" style="left:3553.5px;top:1361px;font-size:36px;color:#1c1c1c;transform:scaleX(0.9537);">10. 29.</span>
<svg style="position:absolute;left:48px;top:1439px" width="48" height="36" viewBox="0 0 48 36"><rect x="1" y="11" width="46" height="14" fill="#f4f9fd"/><line x1="2" y1="11" x2="2" y2="25" stroke="#a9c4e0" stroke-width="2"/><line x1="46" y1="11" x2="46" y2="25" stroke="#a9c4e0" stroke-width="2"/><rect x="1.5" y="1.5" width="45" height="10" fill="#f59393" stroke="#b8453e" stroke-width="3"/><rect x="1.5" y="24.5" width="45" height="10" fill="#9bcd9b" stroke="#5c9c6c" stroke-width="3"/></svg>
<span class="t" id="t51" style="left:113.5px;top:1440px;font-size:36px;color:#1c1c1c;transform:scaleX(0.9550);">Magyarország</span>
<span class="t" id="t52" style="left:3553.5px;top:1440px;font-size:36px;color:#1c1c1c;transform:scaleX(0.9537);">10. 29.</span>
<svg style="position:absolute;left:48px;top:1518px" width="48" height="36" viewBox="0 0 48 36"><rect x="1.5" y="1.5" width="45" height="33" fill="#eef6fd" stroke="#a9c4e0" stroke-width="2"/><rect x="1.5" y="1.5" width="13" height="33" fill="#9bcd9b" stroke="#5c9c6c" stroke-width="3"/><rect x="33.5" y="1.5" width="13" height="33" fill="#f59393" stroke="#b8453e" stroke-width="3"/></svg>
<span class="t" id="t53" style="left:113.5px;top:1519px;font-size:36px;color:#1c1c1c;transform:scaleX(0.9550);">Olaszország</span>
<span class="t" id="t54" style="left:3553.5px;top:1519px;font-size:36px;color:#1c1c1c;transform:scaleX(0.9537);">10. 14.</span>
<svg style="position:absolute;left:48px;top:1597px" width="48" height="36" viewBox="0 0 48 36"><rect x="1.5" y="1.5" width="45" height="33" fill="#eef6fd" stroke="#a9c4e0" stroke-width="2"/><rect x="1.5" y="1.5" width="13" height="33" fill="#9bcd9b" stroke="#5c9c6c" stroke-width="3"/><rect x="33.5" y="1.5" width="13" height="33" fill="#f59393" stroke="#b8453e" stroke-width="3"/></svg>
<span class="t" id="t55" style="left:113.5px;top:1598px;font-size:36px;color:#1c1c1c;transform:scaleX(0.9550);">Olaszország</span>
<span class="t" id="t56" style="left:3553.5px;top:1598px;font-size:36px;color:#1c1c1c;transform:scaleX(0.9537);">10. 17.</span>
<svg style="position:absolute;left:48px;top:1676px" width="48" height="36" viewBox="0 0 48 36"><rect x="1.5" y="1.5" width="45" height="10" fill="#4d6580" stroke="#38475a" stroke-width="3"/><rect x="1.5" y="12.5" width="45" height="10" fill="#f59393" stroke="#b8453e" stroke-width="3"/><rect x="1.5" y="24.5" width="45" height="10" fill="#fde89a" stroke="#f0c27a" stroke-width="3"/></svg>
<span class="t" id="t57" style="left:113.5px;top:1677px;font-size:36px;color:#1c1c1c;transform:scaleX(0.9550);">Németország</span>
<span class="t" id="t58" style="left:3553.5px;top:1677px;font-size:36px;color:#1c1c1c;transform:scaleX(0.9537);">10. 18.</span>
<svg style="position:absolute;left:48px;top:1755px" width="48" height="36" viewBox="0 0 48 36"><rect x="1.5" y="1.5" width="45" height="10" fill="#4d6580" stroke="#38475a" stroke-width="3"/><rect x="1.5" y="12.5" width="45" height="10" fill="#f59393" stroke="#b8453e" stroke-width="3"/><rect x="1.5" y="24.5" width="45" height="10" fill="#fde89a" stroke="#f0c27a" stroke-width="3"/></svg>
<span class="t" id="t59" style="left:113.5px;top:1756px;font-size:36px;color:#1c1c1c;transform:scaleX(0.9550);">Németország</span>
<span class="t" id="t60" style="left:3553.5px;top:1756px;font-size:36px;color:#1c1c1c;transform:scaleX(0.9537);">10. 18.</span>
<svg style="position:absolute;left:48px;top:1834px" width="48" height="36" viewBox="0 0 48 36"><rect x="1.5" y="1.5" width="45" height="10" fill="#4d6580" stroke="#38475a" stroke-width="3"/><rect x="1.5" y="12.5" width="45" height="10" fill="#f59393" stroke="#b8453e" stroke-width="3"/><rect x="1.5" y="24.5" width="45" height="10" fill="#fde89a" stroke="#f0c27a" stroke-width="3"/></svg>
<span class="t" id="t61" style="left:113.5px;top:1835px;font-size:36px;color:#1c1c1c;transform:scaleX(0.9550);">Németország</span>
<span class="t" id="t62" style="left:3553.5px;top:1835px;font-size:36px;color:#1c1c1c;transform:scaleX(0.9537);">10. 18.</span>
<div style="position:absolute;left:3771px;top:680px;width:9px;height:101px;background:#8c8c8c;border-radius:5px"></div>
<div style="position:absolute;left:65px;top:1920px;width:733px;height:71px;background:#fff;border:2px solid #e3e3e3;border-bottom:3px solid #d6d6d6;border-radius:11px;box-sizing:border-box"></div>
<svg style="position:absolute;left:78px;top:1942px" width="40" height="28" viewBox="0 0 40 28"><line x1="3" y1="2" x2="3" y2="25" stroke="#5d6269" stroke-width="3"/><polyline points="20,3 10,13.5 20,24" fill="none" stroke="#5d6269" stroke-width="3"/><polyline points="33,3 23,13.5 33,24" fill="none" stroke="#5d6269" stroke-width="3"/></svg>
<svg style="position:absolute;left:155px;top:1942px" width="36" height="28" viewBox="0 0 36 28"><polyline points="15,3 5,13.5 15,24" fill="none" stroke="#5d6269" stroke-width="3"/><polyline points="28,3 18,13.5 28,24" fill="none" stroke="#5d6269" stroke-width="3"/></svg>
<div style="position:absolute;left:0px;top:2056px;width:3840px;height:3px;background:#c9c9c9"></div>
<div style="position:absolute;left:230px;top:514px;width:3338px;height:1459px;background:#f3f3f3;border:2px solid #a9a9a9;border-radius:21px;box-sizing:border-box;box-shadow:0 12px 95px rgba(0,0,0,0.21), 0 111px 90px rgba(0,0,0,0.106)"></div>
<svg style="position:absolute;left:249.1px;top:526.1px" width="61.800000000000004" height="61.800000000000004" viewBox="-30.900000000000002 -30.900000000000002 61.800000000000004 61.800000000000004"><circle cx="0" cy="0" r="7.21" fill="#5a9d70"/><path d="M 0 -13.39 A 13.39 13.39 0 1 0 13.39 0" fill="none" stroke="#3f90d6" stroke-width="4.3260000000000005" /><path d="M -21.63 0 A 21.63 21.63 0 1 0 0 -21.63" fill="none" stroke="#3f90d6" stroke-width="4.532000000000001" stroke-linecap="round"/></svg>
<span class="t" id="t63" style="left:326.5px;top:542px;font-size:36px;color:#1c1c1c;transform:scaleX(1.0091);">Poison Centre Notification</span>
<svg style="position:absolute;left:3368px;top:540px" width="34" height="34" viewBox="0 0 34 34"><rect x="2.5" y="2.5" width="29" height="29" rx="4" fill="none" stroke="#1c1c1c" stroke-width="3"/></svg>
<svg style="position:absolute;left:3490px;top:540px" width="34" height="34" viewBox="0 0 34 34"><line x1="2" y1="2" x2="32" y2="32" stroke="#1c1c1c" stroke-width="3"/><line x1="32" y1="2" x2="2" y2="32" stroke="#1c1c1c" stroke-width="3"/></svg>
<span class="t" id="t64" style="left:265.5px;top:663px;font-size:36px;color:#1c1c1c;transform:scaleX(0.9776);">Bejelentés típusa</span>
<span class="t" id="t65" style="left:265.5px;top:753px;font-size:36px;color:#1c1c1c;transform:scaleX(1.0058);">Bejelentő</span>
<span class="t" id="t66" style="left:265.5px;top:841px;font-size:36px;color:#1c1c1c;transform:scaleX(1.0124);">Aktív piac</span>
<div style="position:absolute;left:703px;top:641px;width:2827px;height:75px;background:#fff;border:2px solid #e2e2e2;border-bottom:none;border-radius:10px;box-sizing:border-box;overflow:hidden"></div>
<div style="position:absolute;left:703px;top:709px;width:2827px;height:6px;background:#2c72a8;border-radius:0 0 10px 10px"></div>
<span class="t" id="t67" style="left:713.5px;top:663px;font-size:36px;color:#1c1c1c;transform:scaleX(0.9768);">Elsődleges jelentés</span>
<svg style="position:absolute;left:3482.35px;top:670.95px" width="25.299999999999997" height="16.099999999999998" viewBox="0 0 25.299999999999997 16.099999999999998"><polyline points="2.3,2.3 12.649999999999999,12.649999999999999 23.0,2.3" fill="none" stroke="#1c1c1c" stroke-width="3"/></svg>
<div style="position:absolute;left:703px;top:731px;width:2827px;height:75px;background:#fff;border:2px solid #e2e2e2;border-bottom:3px solid #9d9d9d;border-radius:10px;box-sizing:border-box"></div>
<span class="t" id="t68" style="left:713.5px;top:753px;font-size:36px;color:#1c1c1c;transform:scaleX(1.0183);">Trial ltd.</span>
<svg style="position:absolute;left:3482.35px;top:760.95px" width="25.299999999999997" height="16.099999999999998" viewBox="0 0 25.299999999999997 16.099999999999998"><polyline points="2.3,2.3 12.649999999999999,12.649999999999999 23.0,2.3" fill="none" stroke="#1c1c1c" stroke-width="3"/></svg>
<div style="position:absolute;left:703px;top:819px;width:2827px;height:74px;background:#f9f9f9;border:2px solid #e4e4e4;border-radius:10px;box-sizing:border-box"></div>
<svg style="position:absolute;left:721px;top:834px" width="48" height="36" viewBox="0 0 48 36"><rect x="1" y="11" width="46" height="14" fill="#f4f9fd"/><line x1="2" y1="11" x2="2" y2="25" stroke="#a9c4e0" stroke-width="2"/><line x1="46" y1="11" x2="46" y2="25" stroke="#a9c4e0" stroke-width="2"/><rect x="1.5" y="1.5" width="45" height="10" fill="#f59393" stroke="#b8453e" stroke-width="3"/><rect x="1.5" y="24.5" width="45" height="10" fill="#9bcd9b" stroke="#5c9c6c" stroke-width="3"/></svg>
<span class="t" id="t69" style="left:787.5px;top:841px;font-size:36px;color:#1c1c1c;transform:scaleX(0.9864);">Magyarország</span>
<div style="position:absolute;left:703px;top:913px;width:48px;height:48px;background:#fff;border:3px solid #cfcfcf;border-radius:10px;box-sizing:border-box"></div>
<span class="t" id="t70" style="left:762.5px;top:920px;font-size:36px;color:#1c1c1c;transform:scaleX(0.9881);">Csatolja a biztonsági adatlapot PDF formátumban</span>
<div style="position:absolute;left:268px;top:981px;width:3261px;height:795px;background:#fff;border:2px solid #d6d6d6;border-radius:12px;box-sizing:border-box"></div>
<div style="position:absolute;left:270px;top:983px;width:3257px;height:58px;background:#f9f9f9;border-radius:10px 10px 0 0"></div>
<div style="position:absolute;left:270px;top:1041px;width:3257px;height:3px;background:#d8d8d8"></div>
<div style="position:absolute;left:270px;top:1044px;width:3257px;height:81px;background:#f9f9f9"></div>
<span class="t" id="t71" style="left:301.5px;top:996px;font-size:36px;color:#1c1c1c;transform:scaleX(0.9924);">Hibák és figyelmeztetések</span>
<div style="position:absolute;left:509px;top:1044px;width:3px;height:240px;background:#e3e3e3"></div>
<div style="position:absolute;left:699px;top:1044px;width:3px;height:240px;background:#e3e3e3"></div>
<div style="position:absolute;left:1365px;top:1044px;width:3px;height:240px;background:#e3e3e3"></div>
<div style="position:absolute;left:3067px;top:1044px;width:3px;height:240px;background:#e3e3e3"></div>
<div style="position:absolute;left:270px;top:1125px;width:3257px;height:81px;background:#e5e5e5"></div>
<div style="position:absolute;left:270px;top:1283px;width:3257px;height:3px;background:#e3e3e3"></div>
<span class="t" id="t72" style="left:284.5px;top:1069px;font-size:36px;color:#1c1c1c;transform:scaleX(0.9884);">Típus</span>
<span class="t" id="t73" style="left:526.5px;top:1069px;font-size:36px;color:#1c1c1c;transform:scaleX(1.0302);">Kód</span>
<span class="t" id="t74" style="left:716.5px;top:1069px;font-size:36px;color:#1c1c1c;transform:scaleX(0.9925);">Biztonsági adatlap</span>
<span class="t" id="t75" style="left:1382.5px;top:1069px;font-size:36px;color:#1c1c1c;transform:scaleX(0.9394);">Leírás</span>
<span class="t" id="t76" style="left:3084.5px;top:1069px;font-size:36px;color:#1c1c1c;transform:scaleX(0.9877);">Érték</span>
<svg style="position:absolute;left:281px;top:1145px" width="44" height="44" viewBox="0 0 44 44"><rect x="7" y="7" width="30" height="30" rx="4.5" transform="rotate(45 22 22)" fill="#f59393" stroke="#c0443f" stroke-width="3"/></svg>
<span class="t" id="t77" style="left:344.5px;top:1149px;font-size:36px;color:#1c1c1c;transform:scaleX(1.0399);">Hiba</span>
<span class="t" id="t78" style="left:522.5px;top:1149px;font-size:36px;color:#1c1c1c;transform:scaleX(0.9448);">BR530</span>
<span class="t" id="t79" style="left:712.5px;top:1149px;font-size:36px;color:#1c1c1c;transform:scaleX(0.9844);">MINTA Veszélyes keverék</span>
<span class="t" id="t80" style="left:1378.5px;top:1149px;font-size:36px;color:#1c1c1c;transform:scaleX(0.9685);">Adja meg a színt a 9 &quot;Tulajdonságok&quot;. szakaszban.</span>
<span class="t" id="t81" style="left:3080.5px;top:1149px;font-size:36px;color:#1c1c1c;transform:scaleX(0.9844);">MINTA Veszélyes keverék</span>
<svg style="position:absolute;left:281px;top:1224px" width="44" height="44" viewBox="0 0 44 44"><rect x="7" y="7" width="30" height="30" rx="4.5" transform="rotate(45 22 22)" fill="#f59393" stroke="#c0443f" stroke-width="3"/></svg>
<span class="t" id="t82" style="left:344.5px;top:1228px;font-size:36px;color:#1c1c1c;transform:scaleX(1.0399);">Hiba</span>
<span class="t" id="t83" style="left:522.5px;top:1228px;font-size:36px;color:#1c1c1c;transform:scaleX(0.9448);">BR534</span>
<span class="t" id="t84" style="left:712.5px;top:1228px;font-size:36px;color:#1c1c1c;transform:scaleX(0.9844);">MINTA Veszélyes keverék</span>
<span class="t" id="t85" style="left:1378.5px;top:1228px;font-size:36px;color:#1c1c1c;transform:scaleX(0.9492);">Töltse ki az EuPCS (elsődleges rendeltetésszerű felhasználásának) az &quot;Azonosítás&quot;. szakaszban.</span>
<span class="t" id="t86" style="left:3080.5px;top:1228px;font-size:36px;color:#1c1c1c;transform:scaleX(0.9844);">MINTA Veszélyes keverék</span>
<div style="position:absolute;left:274px;top:1840px;width:391px;height:87px;background:#fff;border:3px solid #e0e0e0;border-bottom:3px solid #cdcdcd;border-radius:11px;box-sizing:border-box"></div>
<span class="t" id="t87" style="left:453.5px;top:1870px;font-size:36px;color:#1c1c1c;transform:scaleX(0.9428);">Excel</span>
<div style="position:absolute;left:690px;top:1840px;width:504px;height:87px;background:#fff;border:3px solid #e0e0e0;border-bottom:3px solid #cdcdcd;border-radius:11px;box-sizing:border-box"></div>
<span class="t" id="t88" style="left:866.5px;top:1870px;font-size:36px;color:#1c1c1c;transform:scaleX(0.9616);">PCN-dosszié</span>
<div style="position:absolute;left:2562px;top:1841px;width:545px;height:86px;background:#fff;border:5px solid #2c72a8;border-radius:10px;box-sizing:border-box"></div>
<span class="t" id="t89" style="left:2678.5px;top:1870px;font-size:36px;color:#1c1c1c;transform:scaleX(0.9648);">Online bejelentés (S₂S)</span>
<div style="position:absolute;left:3132px;top:1840px;width:392px;height:87px;background:#fff;border:3px solid #e0e0e0;border-bottom:3px solid #cdcdcd;border-radius:11px;box-sizing:border-box"></div>
<span class="t" id="t90" style="left:3291.5px;top:1870px;font-size:36px;color:#1c1c1c;transform:scaleX(0.9994);">Sztornó</span>
<svg style="position:absolute;left:0px;top:0px" width="1" height="1" viewBox="0 0 1 1"><rect x="326.5" y="1868.3" width="17" height="33.2" fill="#fff" stroke="#5a9e6e" stroke-width="2.6"/><rect x="327" y="1876" width="12" height="2.6" fill="#d6e4ec"/><rect x="327" y="1882.2" width="12" height="2.6" fill="#d6e4ec"/><rect x="327" y="1888.4" width="12" height="2.6" fill="#d6e4ec"/><rect x="327" y="1894.6" width="12" height="2.6" fill="#d6e4ec"/><path d="M298.4 1868.1 L325.3 1862.9 V1907.2 L298.4 1901.7 Z" fill="#a9d5a9" stroke="#5a9e6e" stroke-width="2.6" stroke-linejoin="miter"/><path d="M305 1877 H310 L312 1881 L314 1877 H319 L315 1884.5 L319 1892 H314 L312 1888 L310 1892 H305 L309 1884.5 Z" fill="#fff"/></svg>
<svg style="position:absolute;left:0px;top:0px" width="1" height="1" viewBox="0 0 1 1"><line x1="743.5" y1="1885.0" x2="760.5" y2="1885.0" stroke="#b9b9bf" stroke-width="3.8" stroke-linecap="round"/><line x1="731.5" y1="1885.0" x2="714.5" y2="1885.0" stroke="#b9b9bf" stroke-width="3.8" stroke-linecap="round"/><line x1="742.4" y1="1880.1" x2="753.1" y2="1869.4" stroke="#b9b9bf" stroke-width="3.8" stroke-linecap="round"/><line x1="732.6" y1="1880.1" x2="721.9" y2="1869.4" stroke="#b9b9bf" stroke-width="3.8" stroke-linecap="round"/><line x1="732.6" y1="1889.9" x2="721.9" y2="1900.6" stroke="#b9b9bf" stroke-width="3.8" stroke-linecap="round"/><line x1="737.5" y1="1892.0" x2="737.5" y2="1908.0" stroke="#b9b9bf" stroke-width="3.8" stroke-linecap="round"/><line x1="742.4" y1="1889.9" x2="753.1" y2="1900.6" stroke="#b9b9bf" stroke-width="3.8" stroke-linecap="round"/><path d="M734.3 1865.0 Q734.3 1861.0 737.5 1861.0 Q740.7 1861.0 740.7 1865.0 L738.8 1878.0 H736.2 Z" fill="#4b3a72"/><circle cx="737.5" cy="1885" r="2.2" fill="#4b3a72"/></svg>
<svg style="position:absolute;left:2583px;top:1859px" width="48" height="48" viewBox="0 0 48 48"><circle cx="24.4" cy="24.4" r="20.9" fill="#8ab8ee" stroke="#4f7fc0" stroke-width="2.8"/><path d="M20.6 20.1 H26.3 V32 H29 V35 H20 V32 H22.6 V23.1 H20.6 Z" fill="#fff"/><circle cx="24.5" cy="15.4" r="2.3" fill="#fff"/></svg>
<svg style="position:absolute;left:0px;top:0px" width="1" height="1" viewBox="0 0 1 1"><g transform="translate(3178 1883)"><g transform="rotate(45)"><rect x="-27" y="-4" width="54" height="8" fill="#f28b8b" stroke="#b8453e" stroke-width="2.4"/></g><g transform="rotate(-45)"><rect x="-27" y="-4" width="54" height="8" fill="#f28b8b" stroke="#b8453e" stroke-width="2.4"/></g><g transform="rotate(45)"><rect x="-25.8" y="-2.8" width="51.6" height="5.6" fill="#f28b8b"/></g></g></svg></body></html>
